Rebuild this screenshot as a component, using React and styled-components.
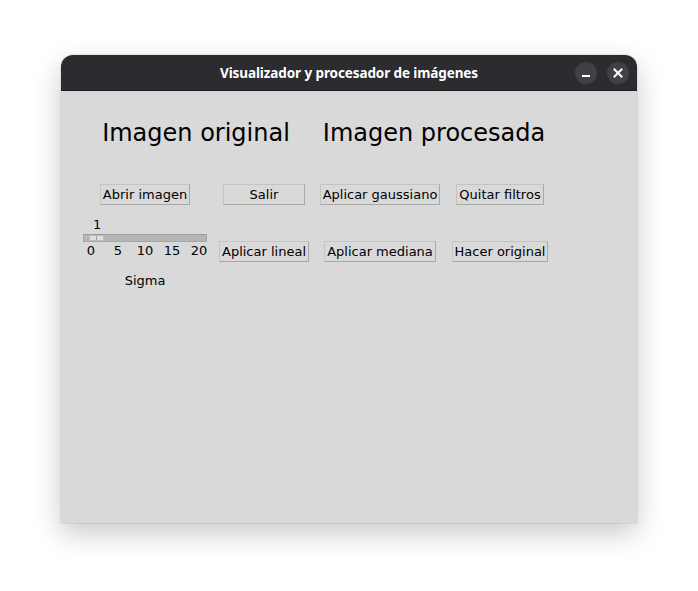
import React from "react";
import styled, { createGlobalStyle } from "styled-components";

const Global = createGlobalStyle`
  html, body { margin: 0; padding: 0; background: #ffffff; }
  body { font-family: "DejaVu Sans", sans-serif; }
`;

const Desktop = styled.div`
  width: 698px;
  height: 591px;
  box-sizing: border-box;
  padding: 55px 0 0 61px;
  background: #ffffff;
`;

const Window = styled.div`
  width: 576px;
  height: 468px;
  display: flex;
  flex-direction: column;
  border-radius: 12px 12px 0 0;
  overflow: hidden;
  background: #d9d9d9;
  box-shadow: 0 10px 28px rgba(0, 0, 0, 0.22), 0 0 0 1px rgba(0, 0, 0, 0.06);
`;

const TitleBar = styled.div`
  height: 36px;
  flex: none;
  background: #2c2c30;
  border-bottom: 1px solid #1c1c1e;
  box-sizing: border-box;
  display: grid;
  grid-template-columns: 1fr auto 1fr;
  align-items: center;
  padding: 0 8px;
`;

const Title = styled.div`
  grid-column: 2;
  color: #ffffff;
  font-family: "Noto Sans", sans-serif;
  font-weight: 700;
  font-size: 13.5px;
  letter-spacing: -0.1px;
`;

const Controls = styled.div`
  grid-column: 3;
  justify-self: end;
  display: flex;
  gap: 10px;
`;

const CircleBtn = styled.div`
  width: 22px;
  height: 22px;
  border-radius: 50%;
  background: #404045;
  display: flex;
  align-items: center;
  justify-content: center;
`;

const Body = styled.div`
  flex: 1;
  padding: 28px 0 0 17px;
  display: grid;
  grid-template-columns: 134px 104px 128px 112px;
  grid-template-rows: 28px 37px 21px 12px 46px auto;
  align-content: start;
  color: #000;
  font-family: "DejaVu Sans", sans-serif;
`;

const Heading = styled.div`
  grid-column: ${(p) => p.$col} / span 2;
  grid-row: 1;
  font-size: 24px;
  line-height: 28px;
  text-align: center;
  padding-right: ${(p) => p.$shift || 0}px;
  white-space: nowrap;
`;

const Button = styled.button`
  grid-column: ${(p) => p.$col};
  grid-row: ${(p) => p.$row};
  justify-self: center;
  align-self: end;
  margin-bottom: ${(p) => (p.$row === 5 ? "1px" : "0")};
  width: ${(p) => (p.$w ? `${p.$w}px` : "auto")};
  height: 21px;
  padding: 0 2px;
  box-sizing: border-box;
  background: #d9d9d9;
  border: 1px solid;
  border-color: #c4c4c4 #a8a8a8 #a8a8a8 #c4c4c4;
  border-radius: 0;
  font-family: "DejaVu Sans", sans-serif;
  font-size: 13px;
  line-height: 19px;
  color: #000;
  white-space: nowrap;
`;

const SliderCell = styled.div`
  grid-column: 1;
  grid-row: 5;
  display: flex;
  flex-direction: column;
`;

const Value = styled.div`
  font-size: 13px;
  line-height: 16px;
  padding-left: 15px;
`;

const Trough = styled.div`
  margin: 1px 0 0 5px;
  width: 124px;
  height: 8px;
  box-sizing: border-box;
  background: #b5b5b5;
  border: 1px solid #a6a6a6;
  border-top-color: #9c9c9c;
  display: flex;
  padding-left: 5px;
`;

const Thumb = styled.div`
  width: 15px;
  height: 6px;
  box-sizing: border-box;
  background: #dedede;
  border: 1px solid #bdbdbd;
  display: flex;
  justify-content: center;
  &::after {
    content: "";
    width: 1px;
    height: 100%;
    background: #a0a0a0;
  }
`;

const Ticks = styled.div`
  display: grid;
  grid-template-columns: repeat(5, 27px);
  margin-left: -0.5px;
  font-size: 13px;
  line-height: 16px;
  margin-top: 1px;
  text-align: center;
`;

const Caption = styled.div`
  grid-column: 1;
  grid-row: 6;
  font-size: 13px;
  line-height: 16px;
  text-align: center;
  margin-top: 10px;
`;

export default function App() {
  return (
    <>
      <Global />
      <Desktop>
        <Window>
          <TitleBar>
            <Title>Visualizador y procesador de imágenes</Title>
            <Controls>
              <CircleBtn>
                <svg width="10" height="10" viewBox="0 0 10 10">
                  <rect x="1" y="7" width="8" height="2" fill="#fff" />
                </svg>
              </CircleBtn>
              <CircleBtn>
                <svg width="10" height="10" viewBox="0 0 10 10">
                  <path d="M1.5 1.5 L8.5 8.5 M8.5 1.5 L1.5 8.5" stroke="#fff" strokeWidth="2" strokeLinecap="square" />
                </svg>
              </CircleBtn>
            </Controls>
          </TitleBar>
          <Body>
            <Heading $col={1} $shift={2}>Imagen original</Heading>
            <Heading $col={3} $shift={4}>Imagen procesada</Heading>

            <Button $col={1} $row={3}>Abrir imagen</Button>
            <Button $col={2} $row={3} $w={82}>Salir</Button>
            <Button $col={3} $row={3}>Aplicar gaussiano</Button>
            <Button $col={4} $row={3}>Quitar filtros</Button>

            <SliderCell>
              <Value>1</Value>
              <Trough>
                <Thumb />
              </Trough>
              <Ticks>
                <span>0</span>
                <span>5</span>
                <span>10</span>
                <span>15</span>
                <span>20</span>
              </Ticks>
            </SliderCell>
            <Button $col={2} $row={5}>Aplicar lineal</Button>
            <Button $col={3} $row={5}>Aplicar mediana</Button>
            <Button $col={4} $row={5}>Hacer original</Button>

            <Caption>Sigma</Caption>
          </Body>
        </Window>
      </Desktop>
    </>
  );
}
